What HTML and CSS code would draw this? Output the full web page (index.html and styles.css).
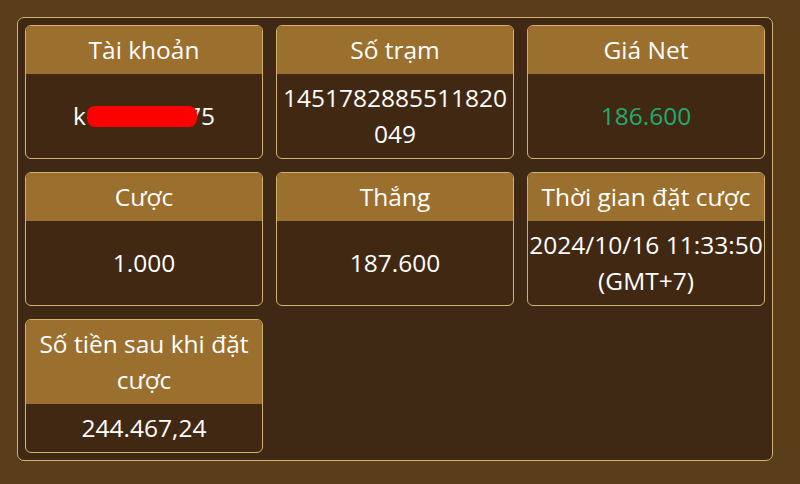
FILE: index.html
```html
<!DOCTYPE html>
<html lang="vi">
<head>
<meta charset="utf-8">
<link rel="stylesheet" href="styles.css">
</head>
<body>
<div class="panel">
  <div class="card">
    <div class="head">Tài khoản</div>
    <div class="body">k<span class="mask"></span>75</div>
  </div>
  <div class="card">
    <div class="head">Số trạm</div>
    <div class="body wrap">1451782885511820049</div>
  </div>
  <div class="card">
    <div class="head">Giá Net</div>
    <div class="body green">186.600</div>
  </div>
  <div class="card">
    <div class="head">Cược</div>
    <div class="body">1.000</div>
  </div>
  <div class="card">
    <div class="head">Thắng</div>
    <div class="body">187.600</div>
  </div>
  <div class="card">
    <div class="head">Thời gian đặt cược</div>
    <div class="body">2024/10/16 11:33:50 (GMT+7)</div>
  </div>
  <div class="card">
    <div class="head">Số tiền sau khi đặt cược</div>
    <div class="body">244.467,24</div>
  </div>
</div>
</body>
</html>
```

FILE: styles.css
```css
html, body {
  margin: 0;
  padding: 0;
}
body {
  background: #5a3d19;
  width: 800px;
  height: 484px;
  padding: 17px;
  box-sizing: border-box;
  font-family: "Open Sans", "Noto Sans", sans-serif;
  font-size: 24.5px;
  color: #ffffff;
}
.panel {
  width: 756px;
  box-sizing: border-box;
  border: 1px solid #d2b273;
  border-radius: 7px;
  background: #3f2914;
  padding: 7px;
  display: grid;
  grid-template-columns: 238px 238px 238px;
  grid-auto-rows: 134px;
  column-gap: 13px;
  row-gap: 13px;
}
.card {
  box-sizing: border-box;
  border: 1px solid #d2b273;
  border-radius: 6px;
  overflow: hidden;
  display: flex;
  flex-direction: column;
  background: #402813;
}
.head {
  background: #9b6f2e;
  text-align: center;
  line-height: 36px;
  padding: 6px 4px;
}
.body {
  flex: 1;
  display: flex;
  align-items: center;
  justify-content: center;
  text-align: center;
  line-height: 36px;
  padding: 6px 0;
}
.wrap {
  overflow-wrap: anywhere;
  word-break: break-all;
}
.green {
  color: #1fac6d;
}
.mask {
  position: relative;
  z-index: 1;
  display: inline-block;
  width: 110px;
  height: 21px;
  border-radius: 8px;
  background: #ff0000;
  margin-left: 1px;
  margin-right: -10px;
  vertical-align: middle;
}
```
